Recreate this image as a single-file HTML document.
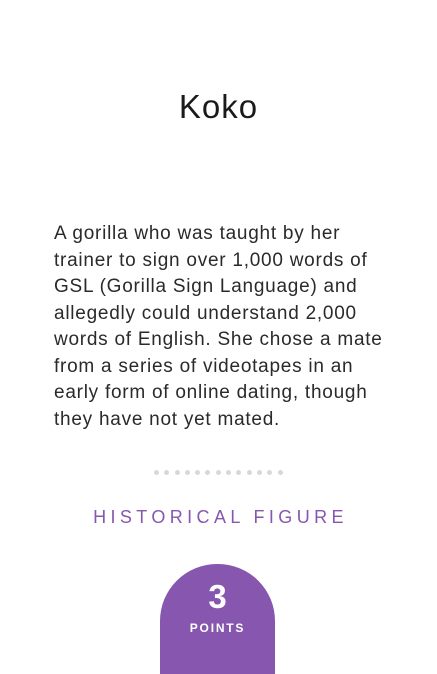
<!DOCTYPE html>
<html><head><style>
body{margin:0;width:437px;height:663px;background:#fff;font-family:"Liberation Sans",sans-serif;position:relative;overflow:hidden;color:#222}
h1{position:absolute;top:88px;left:0;width:437px;text-align:center;margin:0;font-size:33px;letter-spacing:1px;font-weight:normal;color:#1a1a1a}
p{position:absolute;top:221px;left:54px;width:380px;margin:0;font-size:19px;letter-spacing:0.75px;line-height:26.5px;color:#2a2a2a;white-space:nowrap}
.dots{position:absolute;top:470px;left:154px;display:flex;gap:5.3px}
.dots span{width:5px;height:5px;border-radius:50%;background:#d8d8d8}
.cat{position:absolute;top:507px;left:0;width:437px;text-align:center;font-size:18px;letter-spacing:4.4px;color:#8757b0;padding-left:4px;box-sizing:border-box}
.badge{position:absolute;left:160px;top:564px;width:115px;height:110px;background:#8757b0;border-radius:57px 57px 0 0;color:#fff;text-align:center}
.badge b{display:block;font-size:33px;margin-top:16px;line-height:34px}
.badge small{display:block;font-size:12px;font-weight:bold;letter-spacing:1.8px;margin-top:7px}
</style></head><body>
<h1>Koko</h1>
<p>A gorilla who was taught by her<br>trainer to sign over 1,000 words of<br>GSL (Gorilla Sign Language) and<br>allegedly could understand 2,000<br>words of English. She chose a mate<br>from a series of videotapes in an<br>early form of online dating, though<br>they have not yet mated.</p>
<div class="dots"><span></span><span></span><span></span><span></span><span></span><span></span><span></span><span></span><span></span><span></span><span></span><span></span><span></span></div>
<div class="cat">HISTORICAL FIGURE</div>
<div class="badge"><b>3</b><small>POINTS</small></div>
</body></html>
